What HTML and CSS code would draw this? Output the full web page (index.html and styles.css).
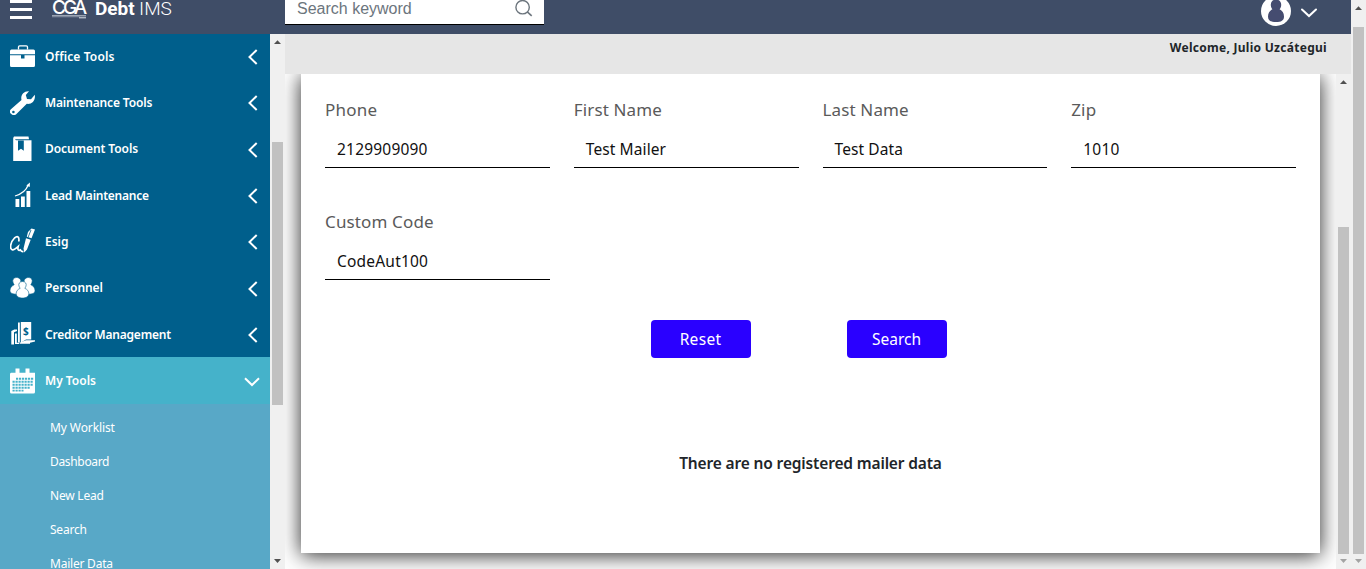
FILE: index.html
```html
<!DOCTYPE html>
<html lang="en">
<head>
<meta charset="utf-8">
<title>Debt IMS</title>
<link rel="stylesheet" href="styles.css">
</head>
<body>
<svg class="defs" width="0" height="0">
  <symbol id="left" viewBox="0 0 10 16"><path d="M8.700 1 1.500 8l7.200 7" fill="none" stroke="#fff" stroke-width="2"/></symbol>
  <symbol id="down" viewBox="0 0 16 10"><path d="M1 1.200 8 8l7-6.800" fill="none" stroke="#fff" stroke-width="2"/></symbol>
  <symbol id="tri-up" viewBox="0 0 8 5"><path d="M0 4h7L3.500.200z" fill="currentColor"/></symbol>
  <symbol id="tri-down" viewBox="0 0 8 5"><path d="M0 0h7L3.500 4z" fill="currentColor"/></symbol>
</svg>
<div class="app">
  <div class="page">
    <header class="topbar">
      <div class="brand">
        <svg class="burger" viewBox="0 0 22 20"><path d="M0 2.500h22M0 10.500h22M0 18.500h22" stroke="#fff" stroke-width="3"/></svg>
        <div class="logo">
          <span class="logo-name">CGA</span>
          <svg class="logo-line" viewBox="0 0 34 4"><path d="M0 .8h34" stroke="#c5cbd6" stroke-width="1"/><path d="M0 1.800h28" stroke="#8b96aa" stroke-width=".8"/><path d="M27 2.800h7" stroke="#dfe3ea" stroke-width="1"/></svg>
        </div>
        <div class="product"><b>Debt</b> IMS</div>
      </div>
      <div class="searchbox">
        <span class="placeholder">Search keyword</span>
        <svg class="lens" viewBox="0 0 18 18"><circle cx="7.600" cy="8.200" r="6.700" fill="none" stroke="#6c757d" stroke-width="1.400"/><path d="m12.300 12.800 4.400 4" stroke="#6c757d" stroke-width="1.600"/></svg>
      </div>
      <div class="account">
        <svg class="avatar" viewBox="0 0 30 30"><circle cx="15" cy="15" r="15" fill="#fff"/><path d="M15 3.500c-3.600 0-5.400 2.800-5.200 5.800.1 1.700.8 3 1.600 4-2.600 1.300-4.400 3.900-4.400 7.200 0 4.200 2.900 5.600 8 5.600s8-1.400 8-5.600c0-3.300-1.800-5.900-4.400-7.200.8-1 1.500-2.300 1.600-4 .2-3-1.600-5.800-5.200-5.800z" fill="#454c70"/></svg>
        <svg class="caret" viewBox="0 0 16 10"><path d="m1 1.500 7 6.600 7-6.600" fill="none" stroke="#fff" stroke-width="2" stroke-linecap="round"/></svg>
      </div>
    </header>
    <div class="body">
      <aside class="sidebar">
        <nav class="menu">
          <div class="item"><svg class="icon" viewBox="0 0 26 26"><path d="M8.500 6.500V4q0-1.200 1.200-1.200h6.600q1.200 0 1.200 1.200v2.500" fill="none" stroke="#fff" stroke-width="1.300"/><path d="M1.500 6.500h22q1.500 0 1.500 1.500v3.300H0V8q0-1.500 1.500-1.500zM0 12.200h11v3.300h3.500v-3.300H25v10.300q0 1.500-1.500 1.500h-22Q0 24 0 22.500z" fill="#fff"/></svg><span class="label l1">Office Tools</span><svg class="chev"><use href="#left"/></svg></div>
          <div class="item"><svg class="icon" viewBox="0 0 26 26"><path d="M11.500 11C10.300 6 13.700 1.800 19 2.200L15.800 6l1.200 4 4 .3 3.800-4.500c.9 5.600-3 9.700-8 9L6.200 25.300Q3.500 27.300 1 24.800T1.200 20z" fill="#fff"/><circle cx="3.400" cy="23" r="1.300" fill="#005f8c"/></svg><span class="label l2">Maintenance Tools</span><svg class="chev"><use href="#left"/></svg></div>
          <div class="item"><svg class="icon" viewBox="0 0 26 26"><path d="M4 .5h14.500l.5 2.700H5.300q-.3 1 1 1H21.500V25H3.200V2z" fill="#fff"/><path d="M8 4.500h5.800v10.300L11 12.800l-3 2z" fill="#005f8c"/></svg><span class="label l3">Document Tools</span><svg class="chev"><use href="#left"/></svg></div>
          <div class="item"><svg class="icon" viewBox="0 0 26 26"><path d="M5.500 17h3.800v8H5.500zM11 14.500h3.800V25H11zM16.500 9h3.800v16h-3.800z" fill="#fff"/><path d="M5 14q10-3 13-10.500" fill="none" stroke="#fff" stroke-width="1.300"/><path d="m16.300 3.400 3.700-2.900-.3 4.500z" fill="#fff"/></svg><span class="label l4">Lead Maintenance</span><svg class="chev"><use href="#left"/></svg></div>
          <div class="item"><svg class="icon" viewBox="0 0 26 26"><path d="M8.800 13.500C9.500 8.500 7.500 7.500 4.500 10 0 14.500-.5 21.500 2.500 21.800c1.800.2 4-1.800 5.700-3.300-1 3.800.8 4.500 2 3.300.8.500.3 2 3.300 1.700" fill="none" stroke="#fff" stroke-width="1.700"/><path d="m18 4 2-2 1.500-1.500 3.500 1-3.500 8.800-4.700-1.500zM16 10.300l4.700 1.500-3.700 9.700-2.700 3-.8-4z" fill="#fff"/><path d="m21 2-3 7.500" stroke="#005f8c" stroke-width=".8"/></svg><span class="label l5">Esig</span><svg class="chev"><use href="#left"/></svg></div>
          <div class="item"><svg class="icon" viewBox="0 0 26 26"><g fill="#fff" stroke="#005f8c" stroke-width=".6"><path d="M6.500 2.500c-3 0-4.300 2.400-3.500 4.800.3 1 .7 1.800 1.200 2.400C1.500 11 0 13 0 15.500c0 3 2.800 3.700 7 3.700s7-.7 7-3.700c0-2.500-1.800-4.500-4.500-5.800.5-.6.9-1.400 1.200-2.400.8-2.400-1.200-4.800-4.200-4.800z"/><path d="M18.500 2.500c-3 0-5 2.400-4.200 4.800.3 1 .7 1.800 1.200 2.400C13 11 11 13 11 15.500c0 3 2.800 3.700 7 3.700s7-.7 7-3.700c0-2.500-1.500-4.500-4.200-5.800.5-.6.9-1.400 1.200-2.400.8-2.400-.5-4.800-3.500-4.800z"/><path d="M12.500 6.500c-3 0-4.300 2.400-3.500 4.600.3.900.7 1.600 1.200 2.200-2.700 1.200-4 3-4 5.200 0 3.200 2.800 4.500 6.300 4.500s6.300-1.300 6.300-4.500c0-2.200-1.300-4-4-5.200.5-.6.9-1.300 1.200-2.200.8-2.200-.5-4.600-3.500-4.600z"/></g></svg><span class="label l6">Personnel</span><svg class="chev"><use href="#left"/></svg></div>
          <div class="item"><svg class="icon" viewBox="0 0 26 26"><path d="M10.800 1h10.400v17.500H16l-4 2.500h-1.200z" fill="#fff"/><path d="M8 1.500h1.800v20H8zM1.300 10l3-1.500h2.700V10L4 11.300V23.500H1.300z" fill="#fff"/><path d="M5 12.500h1.800v9.300h3L9 23H5zM10 21.500l6-2.300h9v1.200l-5 1.300v1h-10z" fill="#fff"/><text class="dollar" x="13" y="14.200">$</text></svg><span class="label l7">Creditor Management</span><svg class="chev"><use href="#left"/></svg></div>
          <div class="item active"><svg class="icon" viewBox="0 0 26 26"><path d="M1 4.800h4.500V.5h4v4.300h6V.5h4v4.300H25V24q0 1.500-1.500 1.500h-22Q0 25.500 0 24V6.300q0-1.500 1-1.500z" fill="#fff"/><path d="M6 10.800h17.500M2.500 13.800h21M2.500 16.800h21M2.500 19.800h18M2.500 22.600h11" stroke="#45b2ca" stroke-width="1.900" stroke-dasharray="2.200 .8"/></svg><span class="label l8">My Tools</span><svg class="chev wide"><use href="#down"/></svg></div>
          <div class="submenu">
            <div class="sub"><span class="s1">My Worklist</span></div>
            <div class="sub"><span class="s2">Dashboard</span></div>
            <div class="sub"><span class="s3">New Lead</span></div>
            <div class="sub"><span class="s4">Search</span></div>
            <div class="sub last"><span class="s5">Mailer Data</span></div>
          </div>
        </nav>
        <div class="scroll side-scroll"><svg class="tri"><use href="#tri-up"/></svg><i class="thumb"></i><svg class="tri"><use href="#tri-down"/></svg></div>
      </aside>
      <main class="main">
        <div class="welcome"><span>Welcome, Julio Uzcátegui</span></div>
        <div class="content">
          <div class="view">
            <section class="card">
              <div class="fields">
                <div class="field"><span class="name n1">Phone</span><div class="value"><span class="v1">2129909090</span></div></div>
                <div class="field"><span class="name n2">First Name</span><div class="value"><span class="v2">Test Mailer</span></div></div>
                <div class="field"><span class="name n3">Last Name</span><div class="value"><span class="v3">Test Data</span></div></div>
                <div class="field"><span class="name n4">Zip</span><div class="value"><span class="v1">1010</span></div></div>
                <div class="field"><span class="name n5">Custom Code</span><div class="value"><span class="v1">CodeAut100</span></div></div>
              </div>
              <div class="actions"><div class="btn"><span class="b1">Reset</span></div><div class="btn"><span>Search</span></div></div>
              <p class="empty">There are no registered mailer data</p>
            </section>
          </div>
          <div class="scroll main-scroll"><svg class="tri"><use href="#tri-up"/></svg><i class="thumb"></i><svg class="tri off"><use href="#tri-down"/></svg></div>
        </div>
      </main>
    </div>
  </div>
  <div class="scroll page-scroll"><svg class="tri"><use href="#tri-up"/></svg><i class="thumb"></i><svg class="tri off"><use href="#tri-down"/></svg></div>
</div>
</body>
</html>
```
FILE: styles.css
```css
* { box-sizing: border-box; }
body { margin: 0; font-family: "Noto Sans", "Open Sans", sans-serif; color: #212529; overflow: hidden; }
span { white-space: nowrap; }
.defs { display: none; }
.app { display: flex; width: 1366px; height: 569px; overflow: hidden; }
.page { width: 1351px; display: flex; flex-direction: column; }

/* Top bar */
.topbar { height: 34px; flex: none; background: #3f4d67; display: flex; overflow: hidden; }
.brand { width: 285px; display: flex; padding-left: 10px; color: #fff; }
.burger { width: 22px; height: 20px; margin-top: -1px; }
.logo { width: 34px; height: 20px; margin-left: 20px; display: flex; flex-direction: column; }
.logo-name { font: 500 19px/16px Inter, sans-serif; letter-spacing: -3px; height: 15px; }
.logo-line { width: 34px; height: 4px; flex: none; }
.product { font: 300 19px/18px Roboto, sans-serif; letter-spacing: -.05px; margin-left: 9px; white-space: nowrap; }
.product b { font-weight: 700; }
.searchbox { width: 259px; height: 25px; background: #fff; border-bottom: 1px solid #000; display: flex; justify-content: space-between; padding: 0 11px 0 12px; }
.placeholder { font: 16px/18px "Liberation Sans", sans-serif; color: #6c757d; }
.lens { width: 18px; height: 18px; margin-top: -1px; }
.account { margin-left: auto; display: flex; padding-right: 34px; gap: 10px; }
.avatar { width: 30px; height: 30px; margin-top: -4px; }
.caret { width: 16px; height: 10px; margin-top: 8px; }

/* Sidebar */
.body { flex: 1; display: flex; min-height: 0; }
.sidebar { width: 285px; display: flex; background: #005f8c; }
.menu { width: 270px; overflow: hidden; display: flex; flex-direction: column; }
.item { height: 46.300px; flex: none; display: flex; align-items: center; padding: 0 9px 0 10px; }
.item:first-child { margin-top: -1px; }
.active { background: #45b2ca; height: 47px; }
.icon { width: 26px; height: 26px; margin-right: 9px; flex: none; }
.label { font-size: 12px; font-weight: 600; color: #fff; line-height: 18px; padding-top: 1.500px; }
.active .label { padding-top: 0; }
.l1 { letter-spacing: .12px; }
.l2 { letter-spacing: -.15px; }
.l3 { letter-spacing: -.08px; }
.l4 { letter-spacing: -.25px; }
.l6 { letter-spacing: -.1px; }
.l7 { letter-spacing: -.19px; }
.chev { width: 10px; height: 16px; margin-left: auto; margin-right: 3px; margin-top: 2px; }
.wide { width: 16px; height: 10px; margin-right: 1px; }
.dollar { font: 700 10px "Noto Sans", sans-serif; fill: #005f8c; }
.submenu { flex: 1 0 auto; background: #58a8c7; padding-top: 7px; }
.sub { height: 34px; padding-left: 50px; font-size: 12px; line-height: 34px; color: #fff; }
.sub.last { height: 22px; }
.s1 { letter-spacing: -.1px; }
.s2 { letter-spacing: -.33px; }
.s3, .s4, .s5 { letter-spacing: -.22px; }

/* Scrollbars */
.scroll { width: 15px; background: #f0f0f0; display: flex; flex-direction: column; align-items: center; color: #505050; padding: 6px 0 5px; }
.thumb { width: 11px; background: #c1c1c1; }
.tri { width: 8px; height: 5px; flex: none; margin-left: 1px; }
.off { color: #a3a3a3; }
.scroll .tri:last-child { margin-top: auto; }
.side-scroll .thumb { height: 263px; margin-top: 97px; }
.main-scroll .thumb { height: 327px; margin-top: 142px; }
.page-scroll .thumb { height: 527px; margin-top: 16px; }

/* Content */
.main { width: 1066px; display: flex; flex-direction: column; }
.welcome { height: 40px; background: #e6e6e6; text-align: right; padding: 5px 24px 0 0; font-size: 12px; line-height: 18px; font-weight: 700; letter-spacing: .28px; }
.content { flex: 1; display: flex; min-height: 0; }
.view { width: 1051px; overflow: hidden; padding: 0 16px; }
.card { height: 479px; background: #fff; box-shadow: 0 2px 20px rgba(0,0,0,.85); padding: 23px 24px 0; }
.fields { display: grid; grid-template-columns: repeat(4, 1fr); gap: 41px 24px; }
.field { height: 71px; }
.name { display: block; font-size: 17px; line-height: 26px; color: #5a5a5a; letter-spacing: .14px; }
.n1 { letter-spacing: .25px; }
.value { height: 45px; border-bottom: 1px solid #000; padding: 15px 12px 0; font-size: 15.500px; line-height: 22px; color: #111; }
.v1 { letter-spacing: .2px; }
.v2, .v3 { letter-spacing: .1px; }
.actions { display: flex; justify-content: center; gap: 96px; margin: 40px 24px 0 0; }
.btn { width: 100px; height: 38px; border-radius: 4px; background: #2a00ff; color: #fff; font-size: 15.500px; line-height: 38px; text-align: center; }
.b1 { letter-spacing: .3px; }
.empty { margin: 94px 0 0; text-align: center; font-size: 15.500px; line-height: 22px; font-weight: 600; letter-spacing: -.15px; }
```
